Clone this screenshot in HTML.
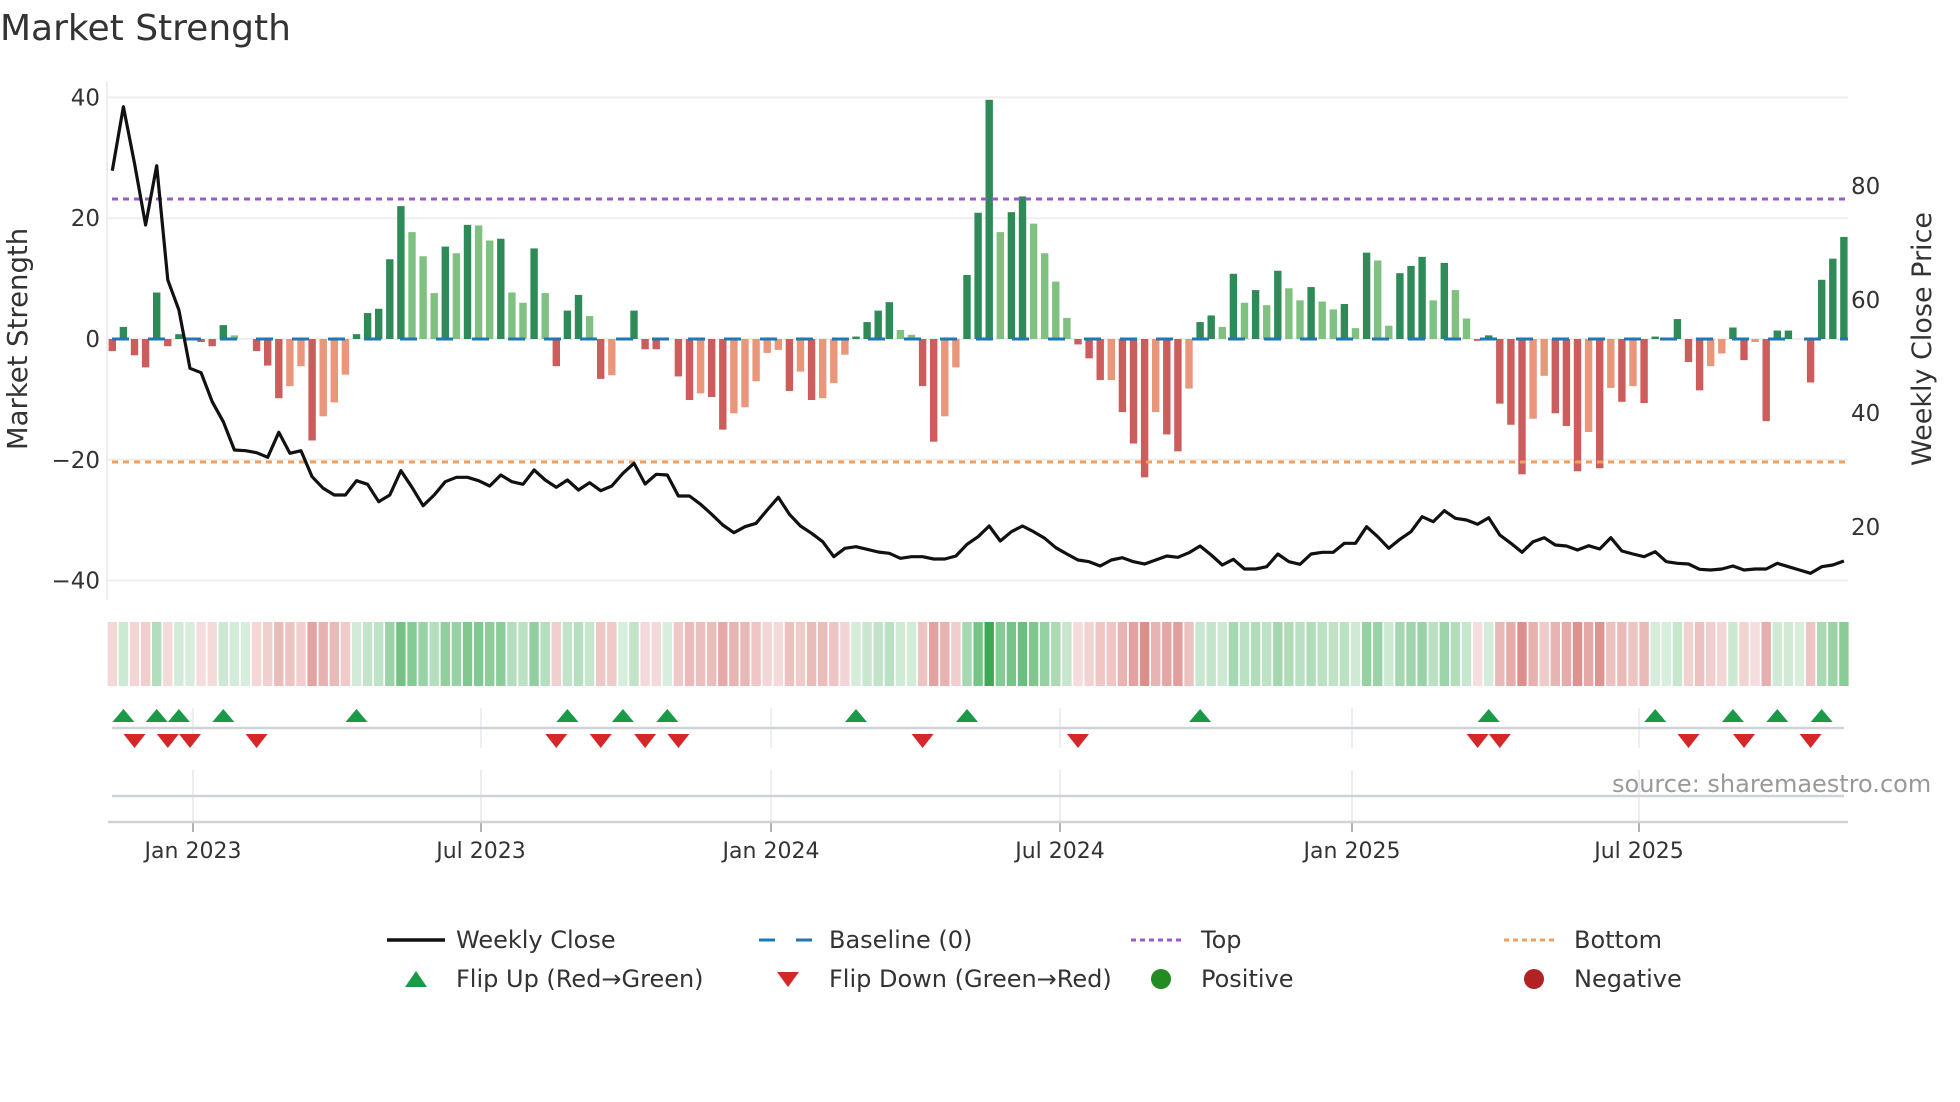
<!DOCTYPE html>
<html><head><meta charset="utf-8"><style>
html,body{margin:0;padding:0;background:#fff;}
svg{display:block;}
text{font-family:"DejaVu Sans","Liberation Sans",sans-serif;fill:#333;}
</style></head><body>
<svg id="s" width="1960" height="1102" viewBox="0 0 1960 1102" xmlns="http://www.w3.org/2000/svg">
<text x="0" y="40" font-size="36">Market Strength</text>
<g id="grid"></g>
<g id="bars"></g>
<g id="over"></g>
<g id="strip"></g>
<g id="marks"></g>
<text x="1612" y="792" font-size="24" style="fill:#999">source: sharemaestro.com</text>
<text transform="translate(27,339) rotate(-90)" text-anchor="middle" font-size="27.5">Market Strength</text>
<text transform="translate(1931,339) rotate(-90)" text-anchor="middle" font-size="27">Weekly Close Price</text>
<!-- legend -->
<g font-size="24">
<line x1="387" y1="940" x2="445" y2="940" stroke="#111" stroke-width="3.5"/>
<text x="456" y="948">Weekly Close</text>
<line x1="759" y1="940" x2="775" y2="940" stroke="#1f77b4" stroke-width="3"/>
<line x1="796" y1="940" x2="812" y2="940" stroke="#1f77b4" stroke-width="3"/>
<text x="829" y="948">Baseline (0)</text>
<line x1="1131" y1="940" x2="1185" y2="940" stroke="#9b59d0" stroke-width="3" stroke-dasharray="5 4"/>
<text x="1201" y="948">Top</text>
<line x1="1504" y1="940" x2="1557" y2="940" stroke="#f0a060" stroke-width="3" stroke-dasharray="5 4"/>
<text x="1574" y="948">Bottom</text>
<polygon points="405,987 427,987 416,971" fill="#1a9a48"/>
<text x="456" y="987">Flip Up (Red→Green)</text>
<polygon points="777,972 799,972 788,987" fill="#d62728"/>
<text x="829" y="987">Flip Down (Green→Red)</text>
<circle cx="1161" cy="979" r="10" fill="#228b22"/>
<text x="1201" y="987">Positive</text>
<circle cx="1534" cy="979" r="10" fill="#b22222"/>
<text x="1574" y="987">Negative</text>
</g>
</svg>
<script>
var NS="http://www.w3.org/2000/svg";
function el(p,t,a,txt){var e=document.createElementNS(NS,t);for(var k in a)e.setAttribute(k,a[k]);if(txt!=null)e.textContent=txt;document.getElementById(p).appendChild(e);return e;}
var v=[-2,2,-2.7,-4.7,7.7,-1.2,0.8,0,-0.5,-1.2,2.3,0.6,0,-2,-4.4,-9.8,-7.8,-4.5,-16.8,-12.8,-10.5,-5.9,0.8,4.3,5,13.2,22,17.7,13.7,7.6,15.3,14.2,18.9,18.8,16.3,16.6,7.7,6,15,7.6,-4.5,4.7,7.3,3.8,-6.6,-6,0,4.7,-1.7,-1.7,0,-6.2,-10.1,-9,-9.6,-15,-12.3,-11.3,-7,-2.3,-1.8,-8.6,-5.4,-10.1,-9.8,-7.3,-2.6,0.4,2.8,4.7,6.1,1.5,0.7,-7.8,-17,-12.8,-4.7,10.6,20.9,39.6,17.7,21,23.6,19.1,14.2,9.5,3.5,-0.9,-3.2,-6.8,-6.8,-12.1,-17.3,-22.9,-12.1,-15.8,-18.6,-8.2,2.8,3.9,2,10.8,6,8.1,5.6,11.3,8.4,6.4,8.6,6.2,4.9,5.8,1.8,14.3,13,2.2,10.9,12.1,13.6,6.4,12.6,8.1,3.4,-0.3,0.6,-10.7,-14.2,-22.4,-13.2,-6.1,-12.3,-14.4,-21.9,-15.4,-21.4,-8.1,-10.4,-7.8,-10.6,0.4,0,3.3,-3.8,-8.5,-4.5,-2.4,1.9,-3.5,-0.5,-13.6,1.4,1.4,0,-7.2,9.8,13.3,16.9];
var light=[12,17,18,20,21,22,28,29,30,32,34,35,37,38,40,44,46,54,57,58,59,60,61,63,65,66,67,72,73,76,77,81,84,85,86,87,91,95,98,101,103,105,107,108,110,111,113,115,116,120,122,123,129,130,134,136,138,145,146,149,153];
var L={};light.forEach(function(n){L[n-1]=1;});
var z3=[272,80,250,435,257,600,690,865,878,965,1025,1110,1112,1118,1132,1057,1120,1112,1190,1225,1245,1245,1202,1213,1265,1245,1172,1222,1277,1245,1205,1192,1192,1202,1218,1185,1205,1213,1170,1200,1222,1200];
var z4=[1230,1208,1232,1218,1180,1150,1212,1183,1185,1248,1248,1273,1303,1335,1358,1340,1330,1290,1252,1303,1338,1360,1385,1430,1405,1400,1408,1416,1420,1435,1430,1430,1437,1437,1428,1393,1370];
var z5=[1338,1383,1355,1338,1355,1375,1403,1422,1440,1445,1458,1440,1433,1445,1452,1440,1428,1432,1418,1398,1425,1455,1438,1467,1467,1460,1422,1445,1453,1422,1417,1417,1390,1390,1340,1370,1405,1378,1355,1310,1325];
var z6=[1292,1315,1320,1333,1313,1365,1390,1417,1385,1373,1395,1398,1410,1397,1407,1373,1413,1422,1430,1415,1445,1450,1452,1468,1470,1467,1458,1470,1467,1467,1450,1460,1470,1480,1460,1455,1443];
var zy=z3.concat(z4,z5,z6);
var X0=112.3,P=11.1,Y0=339,U=6.04;
function bx(i){return X0+i*P;}
[40,20,0,-20,-40].forEach(function(t){var y=Y0-t*U;el('grid','line',{x1:107,x2:1848,y1:y,y2:y,stroke:'#eeeeee','stroke-width':2});
 el('grid','text',{x:100,y:y+8,'text-anchor':'end','font-size':23},t<0?'\u2212'+(-t):''+t);});
el('grid','line',{x1:107,x2:107,y1:81,y2:600,stroke:'#e8e8e8','stroke-width':1.5});
[[80,186],[60,300],[40,413],[20,527]].forEach(function(a){el('grid','text',{x:1851,y:a[1]+8,'font-size':23},''+a[0]);});
for(var i=0;i<v.length;i++){var val=v[i];if(val===0)continue;var h=Math.abs(val)*U;var y=val>0?Y0-h:Y0;
 var c=val>0?(L[i]?'#80c080':'#2e8b57'):(L[i]?'#e9967a':'#cd5c5c');
 el('bars','rect',{x:bx(i)-3.7,y:y,width:7.4,height:Math.max(h,1.5),fill:c});}
el('over','line',{x1:112,x2:1848,y1:199,y2:199,stroke:'#9b59d0','stroke-width':3,'stroke-dasharray':'6 5'});
el('over','line',{x1:112,x2:1848,y1:462,y2:462,stroke:'#f0a060','stroke-width':3,'stroke-dasharray':'6 5'});
el('over','line',{x1:112,x2:1848,y1:Y0,y2:Y0,stroke:'#1f77b4','stroke-width':3,'stroke-dasharray':'17 19'});
var pts=[];for(var i=0;i<zy.length&&i<v.length;i++){pts.push(bx(i).toFixed(1)+','+(80+zy[i]/3).toFixed(1));}
el('over','polyline',{points:pts.join(' '),fill:'none',stroke:'#111','stroke-width':3.2,'stroke-linejoin':'round'});
for(var i=0;i<v.length;i++){var a=Math.abs(v[i]);var t=0.2+0.55*Math.min(a/25,1);if(a>30)t=0.95;
 var b=v[i]>0?[50,165,75]:[205,95,90];if(v[i]===0){b=[60,170,80];t=0.2;}
 var r=Math.round(255*(1-t)+b[0]*t),g=Math.round(255*(1-t)+b[1]*t),bb=Math.round(255*(1-t)+b[2]*t);
 el('strip','rect',{x:bx(i)-4.7,y:622,width:9.4,height:64,fill:'rgb('+r+','+g+','+bb+')'});}
var months=[[193,'Jan 2023'],[481,'Jul 2023'],[771,'Jan 2024'],[1060,'Jul 2024'],[1352,'Jan 2025'],[1639,'Jul 2025']];
months.forEach(function(m){el('marks','line',{x1:m[0],x2:m[0],y1:708,y2:748,stroke:'#e6e8ee','stroke-width':1.5});
 el('marks','line',{x1:m[0],x2:m[0],y1:770,y2:822,stroke:'#e6e8ee','stroke-width':1.5});
 el('marks','line',{x1:m[0],x2:m[0],y1:822,y2:832,stroke:'#999','stroke-width':1.5});
 el('marks','text',{x:m[0],y:858,'text-anchor':'middle','font-size':22},m[1]);});
el('marks','line',{x1:112,x2:1844,y1:728,y2:728,stroke:'#cfd2d6','stroke-width':2.5});
el('marks','line',{x1:112,x2:1844,y1:796,y2:796,stroke:'#cfd2d6','stroke-width':2.5});
el('marks','line',{x1:108,x2:1848,y1:822,y2:822,stroke:'#cfd2d6','stroke-width':2.5});
function snap(d){var r=1.25*d;var i=Math.round((r-X0)/P);return bx(i);}
[98,125,143,178,285,454,498,534,685,773,960,1190,1323,1386,1421,1457].forEach(function(d){var x=snap(d);
 el('marks','polygon',{points:(x-11)+',722 '+(x+11)+',722 '+x+',709',fill:'#1a9a48'});});
[107,133,152,205,445,480,516,543,738,862,1181,1199,1350,1395,1448].forEach(function(d){var x=snap(d);
 el('marks','polygon',{points:(x-11)+',734 '+(x+11)+',734 '+x+',748',fill:'#d62728'});});
</script>
</body></html>
